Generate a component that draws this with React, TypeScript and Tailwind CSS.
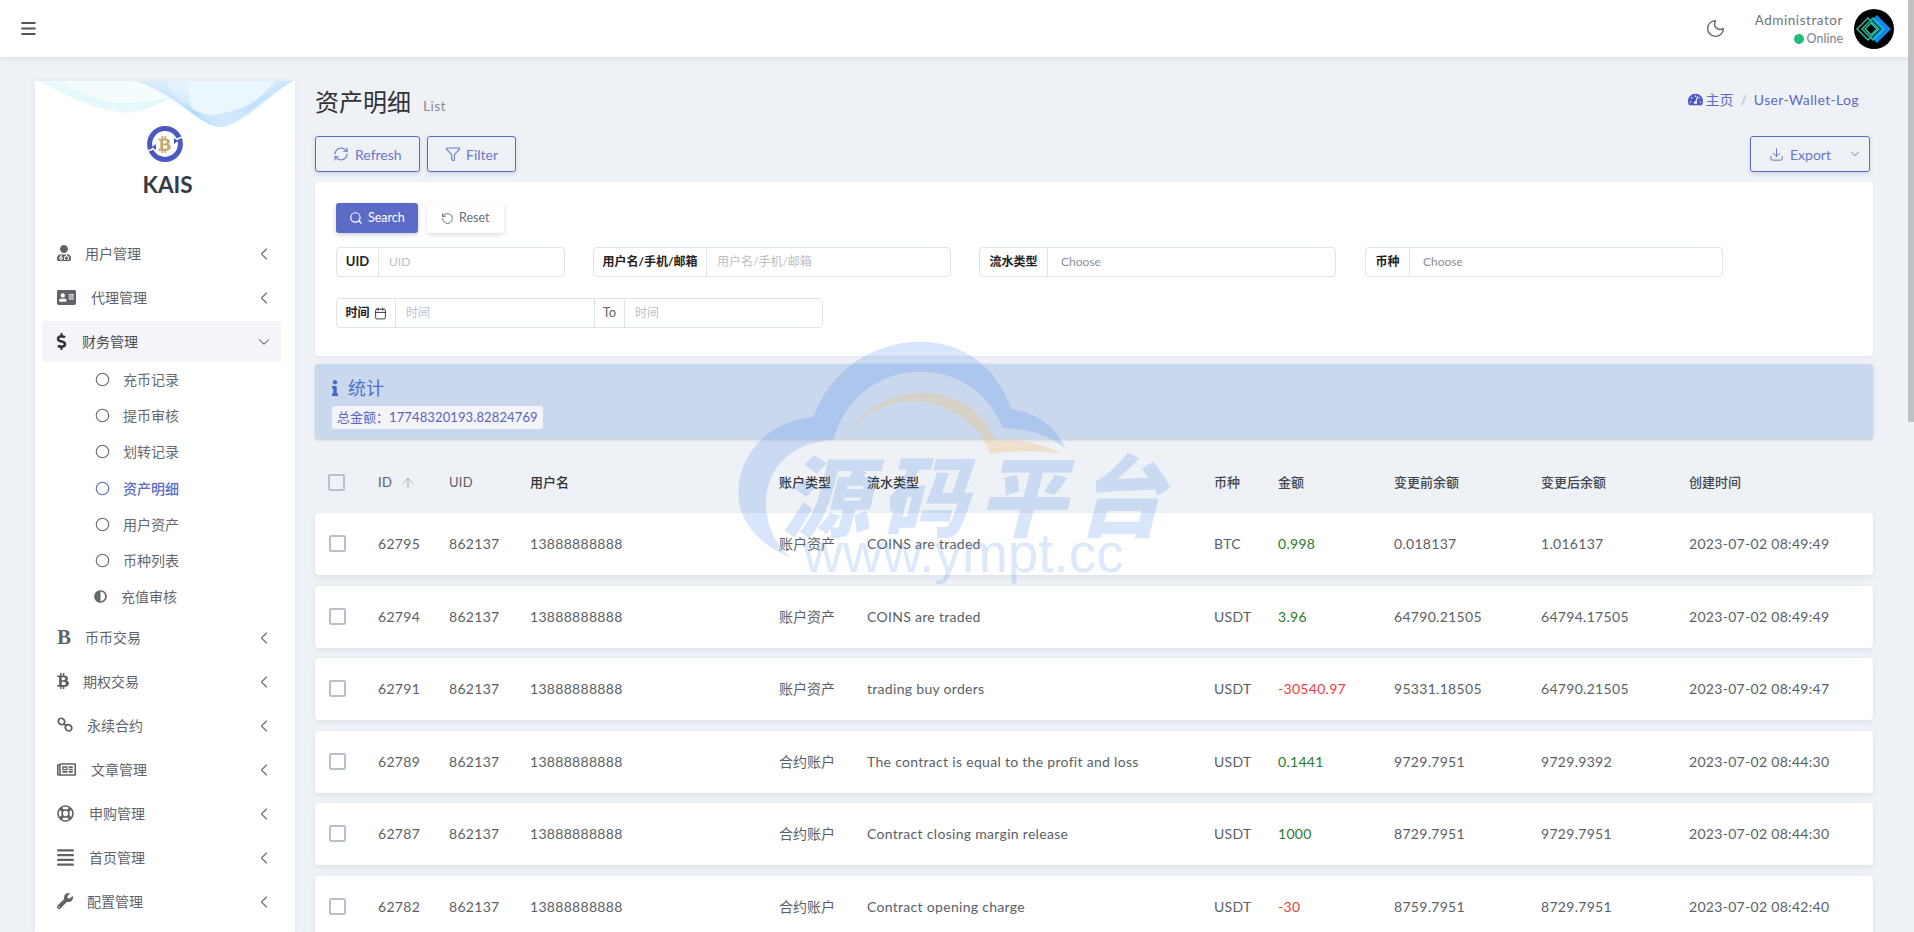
import {
  ArrowUp,
  Calendar,
  ChevronDown,
  ChevronLeft,
  Circle,
  Download,
  Filter,
  Menu,
  Moon,
  RefreshCw,
  RotateCcw,
  Search,
} from "lucide-react";
import {
  FaAddressCard,
  FaAdjust,
  FaAlignJustify,
  FaBtc,
  FaDollarSign,
  FaInfo,
  FaRegLifeRing,
  FaRegNewspaper,
  FaTachometerAlt,
  FaUserMd,
  FaWrench,
} from "react-icons/fa";

const subItems = ["充币记录", "提币审核", "划转记录", "资产明细", "用户资产", "币种列表"];

const rows = [
  { id: "62795", acct: "账户资产", flow: "COINS are traded", coin: "BTC", amt: "0.998", before: "0.018137", after: "1.016137", time: "2023-07-02 08:49:49" },
  { id: "62794", acct: "账户资产", flow: "COINS are traded", coin: "USDT", amt: "3.96", before: "64790.21505", after: "64794.17505", time: "2023-07-02 08:49:49" },
  { id: "62791", acct: "账户资产", flow: "trading buy orders", coin: "USDT", amt: "-30540.97", before: "95331.18505", after: "64790.21505", time: "2023-07-02 08:49:47" },
  { id: "62789", acct: "合约账户", flow: "The contract is equal to the profit and loss", coin: "USDT", amt: "0.1441", before: "9729.7951", after: "9729.9392", time: "2023-07-02 08:44:30" },
  { id: "62787", acct: "合约账户", flow: "Contract closing margin release", coin: "USDT", amt: "1000", before: "8729.7951", after: "9729.7951", time: "2023-07-02 08:44:30" },
  { id: "62782", acct: "合约账户", flow: "Contract opening charge", coin: "USDT", amt: "-30", before: "8759.7951", after: "8729.7951", time: "2023-07-02 08:42:40" },
];

function NavItem({ icon, iconBox, label }: { icon: React.ReactNode; iconBox: string; label: string }) {
  return (
    <div className="flex items-center h-[41px] mb-[3px] pl-[15px] pr-[7px] text-[#5f6368]">
      <span className={`flex items-center shrink-0 ${iconBox}`}>{icon}</span>
      <span className="flex-1 text-[14px]">{label}</span>
      <ChevronLeft size={20} strokeWidth={1.4} className="text-[#6b7076] mt-[2px]" />
    </div>
  );
}

function Sidebar() {
  return (
    <aside className="relative w-[260px] shrink-0 ml-[35px] mt-[24px] bg-white shadow-[0_0_6px_rgba(90,100,130,0.08)]">
      <svg viewBox="0 0 260 46" className="w-[260px] h-[46px] block">
        <path d="M4 0 C40 18 70 34 100 32 C120 30 128 12 124 0Z" fill="#eefafc" opacity="0.6" />
        <path d="M102 0 C140 14 165 46 186 46 C210 44 240 10 258 0Z" fill="#e2f2ff" opacity="0.7" />
        {Array.from({ length: 12 }, (_, i) => (
          <path
            key={i}
            d={`M${4 + i * 2} 0 C ${40 + i * 3} ${18 + i} ${70 + i * 2} ${34 - i} ${100 + i * 2} ${30 - i} S ${130} ${4 + i} ${122 + i} 0`}
            fill="none"
            stroke="#c4ecf5"
            strokeWidth="0.4"
            opacity="0.6"
          />
        ))}
        {Array.from({ length: 18 }, (_, i) => (
          <path
            key={i}
            d={`M${100 + i * 3} 0 C ${140 + i} ${10 + i} ${165 - i} ${46 - i} ${186 - i / 2} ${46 - i / 1.5} C ${205 + i} ${44 - i} ${240 - i} ${8 + i / 2} ${258 - i} 0`}
            fill="none"
            stroke="#9fd0f6"
            strokeWidth="0.4"
            opacity="0.7"
          />
        ))}
      </svg>
      <div className="flex flex-col items-center">
        <div className="relative w-[36px] h-[36px] -ml-[1px] -mt-[1px] rounded-full">
          <svg viewBox="0 0 36 36" className="w-[36px] h-[36px]">
            <circle cx="18" cy="18" r="15.4" fill="none" stroke="#4b58c2" strokeWidth="5" />
            <path d="M1 25 L8 22" stroke="#fff" strokeWidth="1.4" />
            <path d="M35 11 L28 14" stroke="#fff" strokeWidth="1.4" />
            <path d="M5 21 L9 18 L9 24Z" fill="#4b58c2" />
            <path d="M31 15 L27 18 L27 12Z" fill="#4b58c2" />
          </svg>
          <span className="absolute inset-0 flex items-center justify-center text-[#c4a868]">
            <FaBtc size={17} />
          </span>
        </div>
        <div className="mt-[11px] ml-[5px] text-[22.5px] leading-[24px] font-bold text-[#343a46]">KAIS</div>
      </div>

      <nav className="mt-[35.5px] ml-[7px] w-[239px]">
        <NavItem label="用户管理" iconBox="w-[28px]" icon={<FaUserMd size={16} className="-ml-[1px]" />} />
        <NavItem label="代理管理" iconBox="w-[34px]" icon={<FaAddressCard size={19} />} />
        <div className="flex items-center h-[41px] pl-[15px] pr-[7px] bg-[#f4f5f8] text-[#4a4f55]">
          <span className="flex items-center w-[25px] shrink-0 text-[#333]">
            <FaDollarSign size={17} className="-ml-[4px]" />
          </span>
          <span className="flex-1 text-[14px]">财务管理</span>
          <ChevronDown size={18} strokeWidth={1.4} className="text-[#555a60] mt-[2px] mr-[1px]" />
        </div>
        <ul className="mb-[2px]">
          {subItems.map((label) => {
            const active = label === "资产明细";
            return (
              <li
                key={label}
                className={`flex items-center h-[36.2px] pl-[53px] text-[14px] ${active ? "text-[#5c6bc8] font-medium" : "text-[#65696e]"}`}
              >
                <Circle size={15} strokeWidth={1.8} className="w-[15px] shrink-0 mr-[13px]" />
                {label}
              </li>
            );
          })}
          <li className="flex items-center h-[36.2px] pl-[52px] text-[14px] text-[#65696e]">
            <FaAdjust size={13} className="shrink-0 mr-[14px]" />
            充值审核
          </li>
        </ul>
        <NavItem
          label="币币交易"
          iconBox="w-[28px]"
          icon={<span className="text-[21px] leading-none font-bold font-['Liberation_Serif',serif]">B</span>}
        />
        <NavItem label="期权交易" iconBox="w-[26px]" icon={<FaBtc size={16} className="-ml-[2px]" />} />
        <NavItem
          label="永续合约"
          iconBox="w-[30px]"
          icon={
            <svg viewBox="0 0 16 16" className="w-[16px] h-[16px]" fill="none" stroke="currentColor" strokeWidth="1.8">
              <ellipse cx="4.5" cy="4.5" rx="3.4" ry="3" transform="rotate(40 4.5 4.5)" />
              <ellipse cx="11.5" cy="10.8" rx="3.4" ry="3" transform="rotate(40 11.5 10.8)" />
              <path d="M6.5 6.3 L9.5 9" />
            </svg>
          }
        />
        <NavItem label="文章管理" iconBox="w-[34px]" icon={<FaRegNewspaper size={19} />} />
        <NavItem label="申购管理" iconBox="w-[32px]" icon={<FaRegLifeRing size={17} />} />
        <NavItem label="首页管理" iconBox="w-[32px]" icon={<FaAlignJustify size={19} className="-ml-[1px]" />} />
        <NavItem label="配置管理" iconBox="w-[30px]" icon={<FaWrench size={16} />} />
      </nav>
    </aside>
  );
}

function Group({ label, box, addon, placeholder, choose }: { label: React.ReactNode; box: string; addon: string; placeholder?: string; choose?: boolean }) {
  return (
    <div className={`flex h-[30px] border border-[#dde5ea] rounded-[4px] bg-white ${box}`}>
      <div className={`flex items-center justify-center shrink-0 border-r border-[#dde5ea] text-[12px] font-bold text-[#222] ${addon}`}>{label}</div>
      {choose ? (
        <div className="flex-1 flex items-center pl-[13px] text-[12px] text-[#8a8f96]">Choose</div>
      ) : (
        <input placeholder={placeholder} className="flex-1 min-w-0 pl-[10px] text-[12px] outline-none placeholder:text-[#bcc0c6]" />
      )}
    </div>
  );
}

function OutlineButton({ children, className }: { children: React.ReactNode; className: string }) {
  return (
    <button className={`flex items-center h-[36px] border border-[#5c6bc8] rounded-[3px] text-[14px] text-[#6a77c8] shadow-[0_2px_4px_rgba(60,70,120,0.15)] ${className}`}>
      {children}
    </button>
  );
}

function Checkbox({ className }: { className: string }) {
  return <span className={`block w-[17px] h-[17px] border-2 border-[#b7c1cc] rounded-[2px] ${className}`} />;
}

function Table() {
  return (
    <div className="text-[14px]">
      <div className="flex items-center h-[74px] pt-[13px] text-[13px] font-medium text-[#44484e]">
        <div className="w-[63px] pl-[13px]">
          <Checkbox className="bg-transparent" />
        </div>
        <div className="w-[71px] flex items-center font-normal tracking-[0.3px] text-[#5a6068]">
          ID
          <ArrowUp size={16} strokeWidth={1.4} className="ml-[8px] text-[#a3a8ae]" />
        </div>
        <div className="w-[81px] font-normal tracking-[0.3px] text-[#5a6068]">UID</div>
        <div className="w-[249px] text-[#333]">用户名</div>
        <div className="w-[88px] text-[#333]">账户类型</div>
        <div className="w-[347px] text-[#333]">流水类型</div>
        <div className="w-[64px]">币种</div>
        <div className="w-[116px]">金额</div>
        <div className="w-[147px]">变更前余额</div>
        <div className="w-[148px]">变更后余额</div>
        <div>创建时间</div>
      </div>
      {rows.map((r) => (
        <div key={r.id} className="flex items-center h-[62px] pb-[1px] mb-[10.5px] bg-white rounded-[4px] shadow-[0_2px_5px_rgba(70,80,110,0.1)] text-[#5a5f66] tracking-[0.3px]">
          <div className="w-[63px] pl-[14px]">
            <Checkbox className="bg-white" />
          </div>
          <div className="w-[71px]">{r.id}</div>
          <div className="w-[81px]">862137</div>
          <div className="w-[249px]">13888888888</div>
          <div className="w-[88px] tracking-normal">{r.acct}</div>
          <div className="w-[347px]">{r.flow}</div>
          <div className="w-[64px]">{r.coin}</div>
          <div className={`w-[116px] ${r.amt.startsWith("-") ? "text-[#f23d3d]" : "text-[#2a7a2a]"}`}>{r.amt}</div>
          <div className="w-[147px]">{r.before}</div>
          <div className="w-[148px]">{r.after}</div>
          <div>{r.time}</div>
        </div>
      ))}
    </div>
  );
}

function Watermark() {
  return (
    <div className="absolute left-[700px] top-[330px] w-[500px] h-[280px] pointer-events-none">
      <svg viewBox="0 0 1500 840" className="absolute inset-0 w-[500px] h-[280px]">
        <path
          d="M275 685 C170 640 115 570 115 490 C115 370 210 270 340 262 C390 120 520 35 660 35 C790 35 890 110 935 238 C1020 250 1075 300 1095 355 C1040 310 980 295 910 295 C860 180 770 125 660 125 C530 125 430 215 400 330 C280 335 198 410 198 520 C198 590 230 650 275 685Z"
          fill="rgba(60,130,235,0.2)"
        />
        <path
          d="M440 310 C520 180 780 110 888 332 C960 325 1040 345 1085 372 C1020 360 940 360 870 372 C820 230 600 130 440 310Z"
          fill="rgba(240,190,120,0.33)"
        />
      </svg>
      <span className="absolute left-[82px] top-[112px] text-[88px] leading-[100px] font-black italic whitespace-nowrap text-[rgba(60,130,235,0.2)] tracking-[10px] font-['Noto_Sans_CJK_SC',sans-serif]">
        源码平台
      </span>
      <span className="absolute left-[103px] top-[188px] text-[55px] leading-[70px] whitespace-nowrap text-[rgba(60,130,235,0.18)] font-['Liberation_Sans',sans-serif]">
        www.ympt.cc
      </span>
    </div>
  );
}

export default function App() {
  return (
    <div className="relative flex w-[1914px] h-[932px] overflow-hidden bg-[#eef1f6] font-['Lato','Noto_Sans_CJK_SC',sans-serif]">
      <div className="flex flex-col w-[1908px]">
        <header className="flex items-center h-[57px] shrink-0 bg-white shadow-[0_2px_6px_rgba(80,90,120,0.12)] z-10 pl-[19px] pr-[14px]">
          <Menu size={19} strokeWidth={2.4} className="text-[#555]" />
          <Moon size={21} strokeWidth={1.6} className="ml-auto text-[#666]" />
          <div className="ml-[29px] flex flex-col items-end">
            <span className="text-[13.5px] leading-[18px] tracking-[0.55px] text-[#6f7479]">Administrator</span>
            <span className="flex items-center text-[12.5px] leading-[16px] text-[#7b8086] mt-[2px]">
              <span className="w-[10px] h-[10px] rounded-full bg-[#21bd7a] mr-[3px]" />
              Online
            </span>
          </div>
          <svg viewBox="0 0 40 40" className="w-[40px] h-[40px] ml-[11px]">
            <circle cx="20" cy="20" r="20" fill="#000" />
            <path d="M23 6 L37 20 L23 34 L18 29 L27 20 L18 11Z" fill="#1186f0" />
            <path d="M19 9 L30 20 L19 31 L8 20Z" fill="none" stroke="#1fc8a5" strokeWidth="1.4" />
            <path d="M14 9 L25 20 L14 31 L3 20Z" fill="none" stroke="#1fc8a5" strokeWidth="1.4" />
            <path d="M17 14 L23 20 L17 26 L11 20Z" fill="none" stroke="#22d8b8" strokeWidth="1.4" />
          </svg>
        </header>

        <div className="flex flex-1 min-h-0">
          <Sidebar />
          <main className="ml-[20px] w-[1558px]">
            <div className="flex items-center justify-between h-[42px] mt-[24px] mb-[13px]">
              <div className="flex items-baseline">
                <h1 className="text-[24px] font-normal text-[#333]">资产明细</h1>
                <span className="ml-[12px] text-[14px] tracking-[0.3px] text-[#8a8f96]">List</span>
              </div>
              <div className="flex items-center text-[14px] text-[#5c6bc8] pr-[14px] -mt-[6px]">
                <FaTachometerAlt size={15} className="text-[#4a58c0] mr-[3px]" />
                <span>主页</span>
                <span className="mx-[7px] text-[#b4b9c2]">/</span>
                <span className="tracking-[0.35px]">User-Wallet-Log</span>
              </div>
            </div>

            <div className="flex items-center h-[36px] mb-[10px]">
              <OutlineButton className="w-[105px] pl-[17px] gap-[6px]">
                <RefreshCw size={16} strokeWidth={1.6} />
                Refresh
              </OutlineButton>
              <OutlineButton className="w-[89px] ml-[7px] pl-[17px] gap-[5px]">
                <Filter size={16} strokeWidth={1.6} />
                Filter
              </OutlineButton>
              <OutlineButton className="w-[120px] ml-auto mr-[3px] pl-[18px]">
                <Download size={15} strokeWidth={1.6} />
                <span className="ml-[6px]">Export</span>
                <ChevronDown size={14} strokeWidth={1.6} className="ml-auto mr-[7px]" />
              </OutlineButton>
            </div>

            <section className="h-[174px] mb-[8px] bg-white rounded-[4px] pl-[21px] pt-[21px] shadow-[0_1px_3px_rgba(70,80,110,0.06)]">
              <div className="flex h-[30px] mb-[14px]">
                <button className="flex items-center w-[82px] h-[30px] pl-[13px] gap-[5px] rounded-[3px] bg-[#5c6bc8] text-[12.5px] text-white shadow-[0_2px_4px_rgba(60,70,120,0.25)]">
                  <Search size={14} strokeWidth={2} />
                  Search
                </button>
                <button className="flex items-center w-[77px] h-[30px] ml-[9px] pl-[14px] gap-[5px] rounded-[3px] bg-white text-[12.5px] text-[#6a6f76] shadow-[0_2px_5px_rgba(60,70,100,0.18)]">
                  <RotateCcw size={13} strokeWidth={1.8} />
                  Reset
                </button>
              </div>
              <div className="flex mb-[21px]">
                <Group label={<span className="text-[13px]">UID</span>} box="w-[229px]" addon="w-[42px]" placeholder="UID" />
                <Group label="用户名/手机/邮箱" box="w-[358px] ml-[28px]" addon="w-[113px]" placeholder="用户名/手机/邮箱" />
                <Group label="流水类型" box="w-[357px] ml-[28px]" addon="w-[68px]" choose />
                <Group label="币种" box="w-[358px] ml-[29px]" addon="w-[44px]" choose />
              </div>
              <div className="flex w-[487px] h-[30px] border border-[#dde5ea] rounded-[4px]">
                <div className="flex items-center justify-center w-[59px] gap-[4px] shrink-0 border-r border-[#dde5ea] text-[12px] font-bold text-[#222]">
                  时间
                  <Calendar size={13} strokeWidth={1.6} />
                </div>
                <input placeholder="时间" className="w-[198px] pl-[10px] text-[12px] outline-none placeholder:text-[#bcc0c6]" />
                <div className="flex items-center justify-center w-[31px] shrink-0 border-x border-[#dde5ea] text-[13px] text-[#666]">To</div>
                <input placeholder="时间" className="flex-1 min-w-0 pl-[10px] text-[12px] outline-none placeholder:text-[#bcc0c6]" />
              </div>
            </section>

            <section className="h-[75px] bg-[#cad8ee] rounded-[4px] pl-[17px] pt-[11px] shadow-[0_1px_3px_rgba(70,80,110,0.25)]">
              <div className="flex items-center h-[26px] text-[18px] text-[#4a72c9]">
                <FaInfo size={16} className="text-[#3f6ccb] mr-[5px] -ml-[5px]" />
                统计
              </div>
              <div className="inline-flex items-center h-[23px] mt-[5px] px-[5px] rounded-[3px] bg-[#f2f4f9] text-[13px] text-[#5a62c0]">
                总金额：<span className="tracking-[0.12px]">17748320193.82824769</span>
              </div>
            </section>

            <Table />
          </main>
        </div>
      </div>
      <div className="w-[6px] shrink-0 bg-[#f1f1f1] z-20">
        <div className="h-[422px] bg-[#c1c1c1]" />
      </div>
      <Watermark />
    </div>
  );
}
